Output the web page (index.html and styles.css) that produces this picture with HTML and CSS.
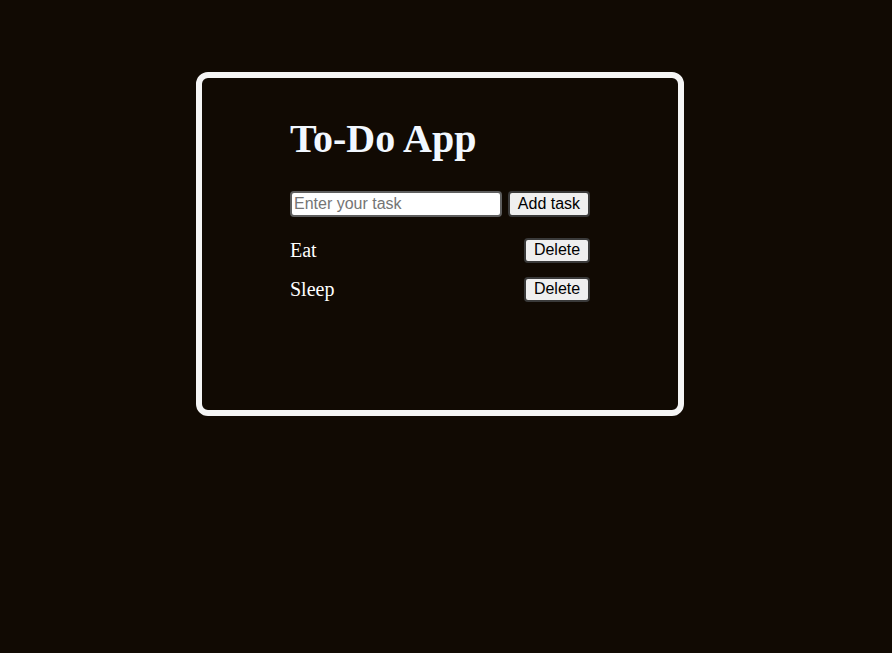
FILE: index.html
```html
<!DOCTYPE html>
<html>
<head>
<meta charset="utf-8">
<title>To-Do App</title>
<link rel="stylesheet" href="styles.css">
</head>
<body>
<div class="card">
  <div class="inner">
    <h1 class="title">To-Do App</h1>
    <div class="form">
      <input class="task-input" type="text" placeholder="Enter your task">
      <button class="btn btn-add">Add task</button>
    </div>
    <ul class="list">
      <li class="item"><span class="item-text">Eat</span><button class="btn">Delete</button></li>
      <li class="item"><span class="item-text">Sleep</span><button class="btn">Delete</button></li>
    </ul>
  </div>
</div>
</body>
</html>
```
FILE: styles.css
```css
html, body {
  margin: 0;
  padding: 0;
  background: #110a03;
  font-family: "Liberation Serif", "Times New Roman", serif;
  color: #ffffff;
}
body {
  padding-top: 72px;
  padding-left: 196px;
}
.card {
  box-sizing: border-box;
  width: 488px;
  height: 344px;
  border: 6px solid #f5f5f5;
  border-radius: 12px;
  padding: 38px 0 0 88px;
}
.inner {
  width: 300px;
}
.title {
  margin: 0 0 29px;
  font-size: 40px;
  line-height: 46px;
  font-weight: bold;
  color: #f2f8ff;
}
.form {
  display: flex;
  align-items: center;
  gap: 6px;
}
.task-input {
  box-sizing: border-box;
  width: 212px;
  height: 26px;
  font-family: "Liberation Sans", Arial, sans-serif;
  font-size: 16px;
  padding: 1px 2px;
  border: 2px solid #5e5e5e;
  border-radius: 4px;
  background: #fff;
  color: #000;
}
.task-input::placeholder {
  color: #757575;
}
.btn {
  box-sizing: border-box;
  height: 26px;
  font-family: "Liberation Sans", Arial, sans-serif;
  font-size: 16px;
  padding: 0 8px;
  border: 2px solid #3a3a3a;
  border-radius: 4px;
  background: #efefef;
  color: #000;
}
.btn-add {
  width: 82px;
  padding: 0;
}
.list {
  list-style: none;
  margin: 20px 0 0;
  padding: 0;
}
.item {
  display: flex;
  align-items: center;
  justify-content: space-between;
  height: 26px;
  margin-bottom: 13px;
}
.item .btn {
  width: 66px;
  height: 25px;
  padding: 0;
}
.item-text {
  font-size: 20px;
}
```
